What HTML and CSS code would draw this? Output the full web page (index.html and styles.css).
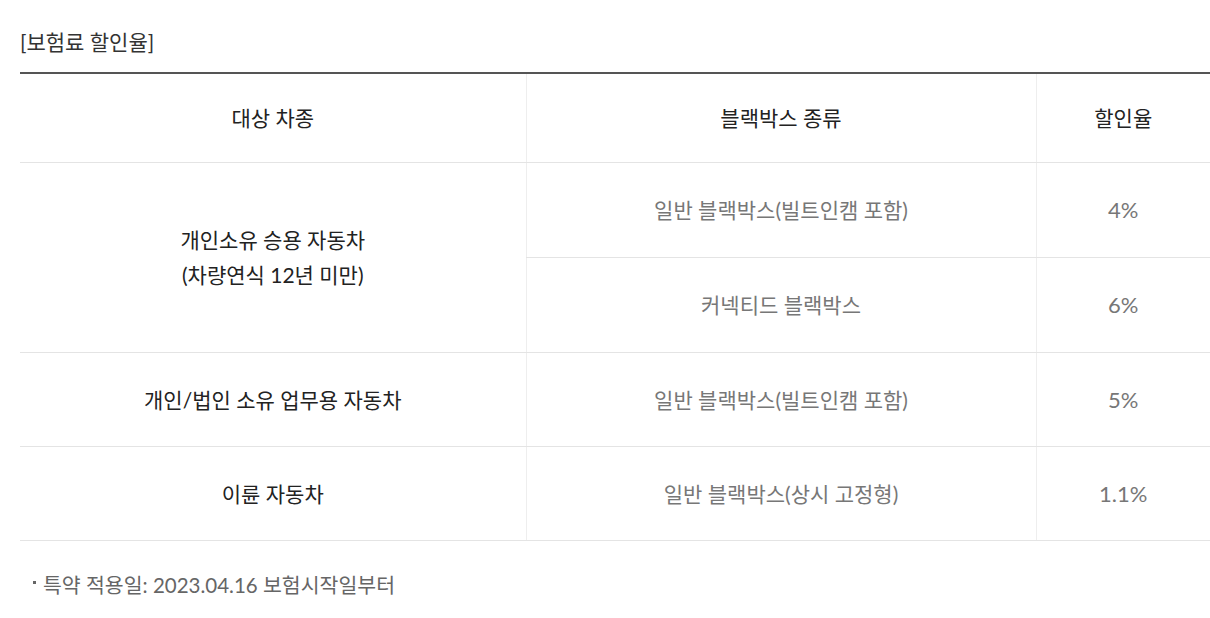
FILE: index.html
```html
<!DOCTYPE html>
<html lang="ko">
<head>
<meta charset="utf-8">
<link rel="stylesheet" href="styles.css">
</head>
<body>
<div class="wrap">
  <h3 class="title">[보험료 할인율]</h3>
  <table class="rate-table">
    <colgroup>
      <col class="c1"><col class="c2"><col class="c3">
    </colgroup>
    <thead>
      <tr class="head-row">
        <th>대상 차종</th>
        <th>블랙박스 종류</th>
        <th>할인율</th>
      </tr>
    </thead>
    <tbody>
      <tr>
        <td class="kind" rowspan="2">개인소유 승용 자동차<br>(차량연식 12년 미만)</td>
        <td>일반 블랙박스(빌트인캠 포함)</td>
        <td class="num">4%</td>
      </tr>
      <tr>
        <td>커넥티드 블랙박스</td>
        <td class="num">6%</td>
      </tr>
      <tr class="short">
        <td class="kind">개인/법인 소유 업무용 자동차</td>
        <td>일반 블랙박스(빌트인캠 포함)</td>
        <td class="num">5%</td>
      </tr>
      <tr class="short">
        <td class="kind">이륜 자동차</td>
        <td>일반 블랙박스(상시 고정형)</td>
        <td class="num">1.1%</td>
      </tr>
    </tbody>
  </table>
  <p class="note"><span class="dot"></span>특약 적용일: 2023.04.16 보험시작일부터</p>
</div>
</body>
</html>
```

FILE: styles.css
```css
* { box-sizing: border-box; }
body {
  margin: 0;
  background: #fff;
  font-family: Lato, "Noto Sans CJK KR", sans-serif;
}
.wrap {
  padding: 24px 0 0 20px;
}
.title {
  margin: 0 0 12px;
  font-size: 21px;
  line-height: 36px;
  font-weight: 400;
  color: #333;
}
.rate-table {
  width: 1190px;
  border-collapse: collapse;
  border-top: 2px solid #555;
  border-bottom: 1px solid #e0e0e0;
  table-layout: fixed;
}
.c1 { width: 506px; }
.c2 { width: 510px; }
.c3 { width: 174px; }
.rate-table th,
.rate-table td {
  padding: 0;
  text-align: center;
  vertical-align: middle;
  font-size: 21px;
  line-height: 35px;
  border-bottom: 1px solid #e4e4e4;
  border-left: 1px solid #eee;
}
.rate-table th:first-child,
.rate-table td.kind {
  border-left: none;
}
.rate-table th {
  height: 89px;
  font-weight: 400;
  color: #222;
}
.rate-table td {
  height: 95px;
  color: #777;
}
.rate-table tr.short td {
  height: 94px;
}
.rate-table td.num {
  font-size: 22px;
}
.rate-table td.kind {
  color: #222;
}
.note {
  margin: 29px 0 0 13px;
  font-size: 20.5px;
  line-height: 30px;
  color: #666;
  display: flex;
  align-items: center;
}
.dot {
  width: 3px;
  height: 3px;
  background: #666;
  margin-right: 7px;
  margin-top: -4px;
}
```
